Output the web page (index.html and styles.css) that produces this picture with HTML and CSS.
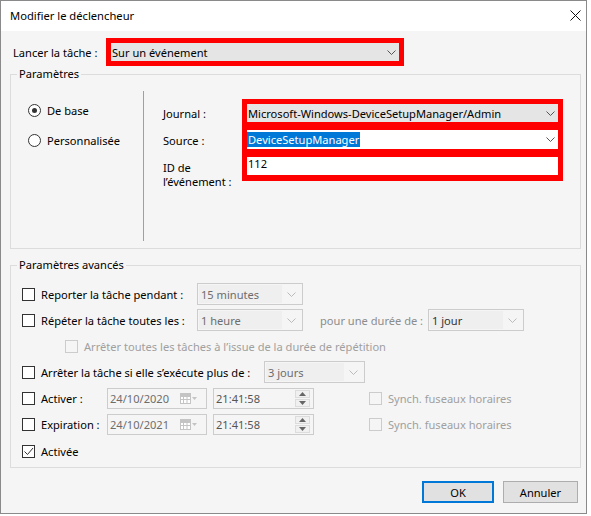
FILE: index.html
```html
<!DOCTYPE html>
<html lang="fr">
<head>
<meta charset="utf-8">
<title>Modifier le déclencheur</title>
<link rel="stylesheet" href="styles.css">
</head>
<body>
<div class="window">
  <div class="titlebar">
    <span class="title">Modifier le déclencheur</span>
    <svg class="close" width="11" height="11" viewBox="0 0 11 11"><path d="M0.5 0.5L10.5 10.5M10.5 0.5L0.5 10.5" stroke="#111" stroke-width="1" fill="none"/></svg>
  </div>
  <div class="content">
    <div class="launch-row">
      <span class="launch-label">Lancer la tâche :</span>
      <div class="redbox launch-box">
        <div class="combo combo-gray launch-combo">
          <span>Sur un événement</span>
          <svg class="chev" width="9" height="5" viewBox="0 0 9 5"><path d="M0.5 0.5L4.5 4.5L8.5 0.5" stroke="#555" fill="none"/></svg>
        </div>
      </div>
    </div>

    <div class="group group-params">
      <span class="legend">Paramètres</span>
      <div class="radios">
        <div class="radio-row"><span class="radio checked"></span><span>De base</span></div>
        <div class="radio-row"><span class="radio"></span><span>Personnalisée</span></div>
      </div>
      <div class="vsep"></div>
      <div class="event-labels">
        <div class="l-journal">Journal :</div>
        <div class="l-source">Source :</div>
        <div class="l-id">ID de<br>l’événement :</div>
      </div>
      <div class="redbox fields">
        <div class="combo combo-gray field f-journal">
          <span>Microsoft-Windows-DeviceSetupManager/Admin</span>
          <svg class="chev" width="9" height="5" viewBox="0 0 9 5"><path d="M0.5 0.5L4.5 4.5L8.5 0.5" stroke="#555" fill="none"/></svg>
        </div>
        <div class="combo white field f-source">
          <span class="sel">DeviceSetupManager</span>
          <svg class="chev" width="9" height="5" viewBox="0 0 9 5"><path d="M0.5 0.5L4.5 4.5L8.5 0.5" stroke="#555" fill="none"/></svg>
        </div>
        <div class="white field f-id">112</div>
      </div>
    </div>

    <div class="group group-adv">
      <span class="legend">Paramètres avancés</span>

      <div class="row">
        <span class="cb"></span>
        <span class="lbl w-156">Reporter la tâche pendant :</span>
        <div class="dcombo w-106"><span class="dtext">15 minutes</span><span class="darrow"><svg width="9" height="5" viewBox="0 0 9 5"><path d="M0.5 0.5L4.5 4.5L8.5 0.5" stroke="#bbb" fill="none"/></svg></span></div>
      </div>

      <div class="row">
        <span class="cb"></span>
        <span class="lbl w-156">Répéter la tâche toutes les :</span>
        <div class="dcombo w-106"><span class="dtext">1 heure</span><span class="darrow"><svg width="9" height="5" viewBox="0 0 9 5"><path d="M0.5 0.5L4.5 4.5L8.5 0.5" stroke="#bbb" fill="none"/></svg></span></div>
        <span class="lbl dis duree">pour une durée de :</span>
        <div class="dcombo w-96"><span class="dtext dark">1 jour</span><span class="darrow"><svg width="9" height="5" viewBox="0 0 9 5"><path d="M0.5 0.5L4.5 4.5L8.5 0.5" stroke="#bbb" fill="none"/></svg></span></div>
      </div>

      <div class="row indent">
        <span class="cb cb-dis"></span>
        <span class="lbl dis">Arrêter toutes les tâches à l’issue de la durée de répétition</span>
      </div>

      <div class="row">
        <span class="cb"></span>
        <span class="lbl w-223">Arrêter la tâche si elle s’exécute plus de :</span>
        <div class="dcombo w-101"><span class="dtext">3 jours</span><span class="darrow"><svg width="9" height="5" viewBox="0 0 9 5"><path d="M0.5 0.5L4.5 4.5L8.5 0.5" stroke="#bbb" fill="none"/></svg></span></div>
      </div>

      <div class="row">
        <span class="cb"></span>
        <span class="lbl w-66">Activer :</span>
        <div class="datebox"><span class="dt">24/10/2020</span>
          <svg class="cal" width="18" height="11" viewBox="0 0 18 11"><rect x="0.5" y="0.5" width="10" height="10" fill="#fff" stroke="#c4c4c4"/><path d="M0.5 3.5H10.5M0.5 6.5H10.5M3.5 3.5V10.5M7 3.5V10.5" stroke="#c4c4c4" fill="none"/><rect x="0.5" y="0.5" width="10" height="2.5" fill="#c4c4c4"/><path d="M12 4H17L14.5 7Z" fill="#c4c4c4"/></svg>
        </div>
        <div class="timebox"><span class="tt">21:41:58</span>
          <span class="spin"><span class="sbtn"><svg width="7" height="4" viewBox="0 0 7 4"><path d="M0 4H7L3.5 0Z" fill="#666"/></svg></span><span class="sbtn"><svg width="7" height="4" viewBox="0 0 7 4"><path d="M0 0H7L3.5 4Z" fill="#666"/></svg></span></span>
        </div>
        <span class="cb cb-dis sync"></span>
        <span class="lbl dis">Synch. fuseaux horaires</span>
      </div>

      <div class="row">
        <span class="cb"></span>
        <span class="lbl w-66">Expiration :</span>
        <div class="datebox"><span class="dt">24/10/2021</span>
          <svg class="cal" width="18" height="11" viewBox="0 0 18 11"><rect x="0.5" y="0.5" width="10" height="10" fill="#fff" stroke="#c4c4c4"/><path d="M0.5 3.5H10.5M0.5 6.5H10.5M3.5 3.5V10.5M7 3.5V10.5" stroke="#c4c4c4" fill="none"/><rect x="0.5" y="0.5" width="10" height="2.5" fill="#c4c4c4"/><path d="M12 4H17L14.5 7Z" fill="#c4c4c4"/></svg>
        </div>
        <div class="timebox"><span class="tt">21:41:58</span>
          <span class="spin"><span class="sbtn"><svg width="7" height="4" viewBox="0 0 7 4"><path d="M0 4H7L3.5 0Z" fill="#666"/></svg></span><span class="sbtn"><svg width="7" height="4" viewBox="0 0 7 4"><path d="M0 0H7L3.5 4Z" fill="#666"/></svg></span></span>
        </div>
        <span class="cb cb-dis sync"></span>
        <span class="lbl dis">Synch. fuseaux horaires</span>
      </div>

      <div class="row last">
        <span class="cb checked"><svg width="11" height="11" viewBox="0 0 11 11"><path d="M1.5 5.5L4.5 8.5L10 2" stroke="#333" stroke-width="1" fill="none"/></svg></span>
        <span class="lbl">Activée</span>
      </div>
    </div>

    <div class="buttons">
      <button class="btn btn-ok">OK</button>
      <button class="btn">Annuler</button>
    </div>
  </div>
</div>
</body>
</html>
```

FILE: styles.css
```css
* { box-sizing: border-box; }
html, body { margin: 0; padding: 0; background: #ffffff; }
body {
  width: 591px;
  height: 516px;
  overflow: hidden;
  font-family: "Noto Sans", "Liberation Sans", sans-serif;
  font-size: 11.1px;
  color: #000;
}
.window {
  width: 587px;
  height: 514px;
  border: 1px solid #8a8a8a;
  background: #f5f5f5;
  display: flex;
  flex-direction: column;
}
.titlebar {
  flex: none;
  height: 30px;
  background: #fff;
  display: flex;
  align-items: center;
  padding: 0 0 2px 9px;
}
.title { flex: 1; font-size: 11.2px; }
.close { margin-right: 5px; }

.content { flex: 1; padding-left: 9px; }

.launch-row {
  margin-top: 7px;
  height: 28px;
  display: flex;
  align-items: center;
}
.launch-label { width: 93px; margin-left: 3px; }
.redbox { background: #ff0000; }
.launch-box { width: 298px; height: 28px; padding: 5px; }
.combo {
  display: flex;
  align-items: center;
  justify-content: space-between;
}
.combo-gray { background: #e5e5e5; }
.white { background: #fff; }
.launch-combo { height: 18px; padding: 0 3px 0 1px; }
.chev { flex: none; }

.group {
  position: relative;
  width: 571px;
  border: 1px solid #dcdcdc;
}
.legend {
  position: absolute;
  top: -9px;
  left: 6px;
  padding: 0 2px;
  line-height: 16px;
  background: #f5f5f5;
}
.group-params {
  margin-top: 8px;
  height: 175px;
  display: flex;
  align-items: flex-start;
  padding-left: 17px;
}
.radios {
  width: 115px;
  margin-top: 25px;
  display: flex;
  flex-direction: column;
  gap: 9px;
}
.radio-row { display: flex; align-items: center; height: 21px; }
.radio {
  position: relative;
  width: 13px;
  height: 13px;
  border: 1px solid #333;
  border-radius: 50%;
  background: #fff;
  margin-right: 6px;
  flex: none;
}
.radio.checked::after {
  content: "";
  position: absolute;
  left: 3px;
  top: 3px;
  width: 5px;
  height: 5px;
  border-radius: 50%;
  background: #333;
}
.vsep { width: 1px; height: 150px; margin-top: 16px; background: #a0a0a0; }
.event-labels { width: 79px; margin-left: 19px; }
.l-journal { margin-top: 31px; line-height: 16px; }
.l-source { margin-top: 11px; line-height: 16px; }
.l-id { margin-top: 12px; line-height: 14px; }
.fields {
  margin-top: 24px;
  width: 321px;
  padding: 5px 5px 6px;
  display: flex;
  flex-direction: column;
  gap: 8px;
}
.field { padding: 0 3px 0 1px; }
.f-journal { height: 18px; }
.f-source { height: 19px; padding-left: 0; }
.sel { background: #0078d7; color: #fff; line-height: 15px; padding: 0 1px; }
.f-id { height: 18px; line-height: 14px; }

.group-adv {
  margin-top: 16px;
  height: 203px;
  padding: 15px 0 0 11px;
}
.row { display: flex; align-items: center; height: 26px; white-space: nowrap; }
.row.indent { padding-left: 43px; }
.row.last { margin-top: 1px; }
.cb {
  flex: none;
  width: 13px;
  height: 13px;
  border: 1px solid #333;
  background: #fff;
  margin-right: 6px;
  display: flex;
  align-items: center;
  justify-content: center;
}
.cb-dis { border-color: #cccccc; background: #f5f5f5; }
.cb.sync { margin-left: 55px; }
.lbl { flex: none; }
.dis { color: #a0a0a0; }
.w-156 { width: 156px; }
.w-223 { width: 223px; }
.w-66 { width: 66px; }
.duree { width: 108px; margin-left: 17px; color: #8c8c8c; }

.dcombo {
  flex: none;
  height: 22px;
  border: 1px solid #cccccc;
  display: flex;
  align-items: stretch;
  padding: 1px;
}
.w-106 { width: 106px; }
.w-96 { width: 96px; }
.w-101 { width: 101px; }
.dtext {
  flex: 1;
  background: #efefef;
  color: #6d6d6d;
  padding-left: 2px;
  display: flex;
  align-items: center;
}
.dtext.dark { color: #333; }
.darrow {
  flex: none;
  width: 19px;
  display: flex;
  align-items: center;
  justify-content: center;
}

.datebox, .timebox {
  flex: none;
  height: 21px;
  border: 1px solid #cccccc;
  display: flex;
  align-items: center;
  justify-content: space-between;
}
.datebox { width: 100px; padding: 0 8px 0 2px; }
.timebox { width: 101px; margin-left: 6px; padding: 0 3px 0 2px; }
.dt { color: #6d6d6d; }
.tt { color: #555; }
.spin { display: flex; flex-direction: column; gap: 1px; }
.sbtn {
  width: 15px;
  height: 8px;
  border: 1px solid #dcdcdc;
  background: #f0f0f0;
  display: flex;
  align-items: center;
  justify-content: center;
}

.buttons {
  width: 571px;
  margin-top: 13px;
  display: flex;
  justify-content: flex-end;
  gap: 9px;
  padding-right: 3px;
}
.btn {
  height: 22px;
  width: 75px;
  border: 1px solid #adadad;
  background: #e1e1e1;
  font-family: inherit;
  font-size: 11.1px;
  color: #000;
  padding: 0;
  margin: 0;
}
.btn-ok { width: 72px; border: 2px solid #0078d7; }
```
